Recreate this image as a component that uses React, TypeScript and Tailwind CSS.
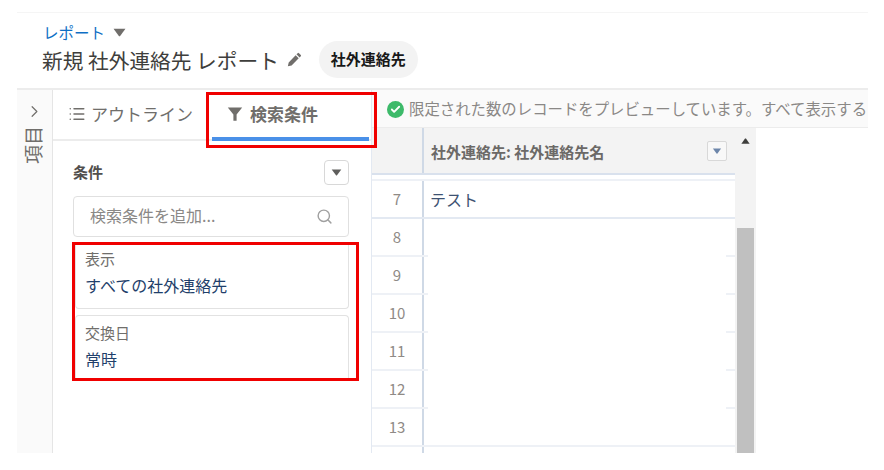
import { Check, ChevronRight, List, Search } from "lucide-react";

const font = "font-['Noto_Sans_CJK_JP','Noto_Sans',sans-serif]";

const Caret = ({ className }: { className: string }) => (
  <svg viewBox="0 0 12 8" className={className} fill="currentColor">
    <path d="M0.5 0.5h11L6.6 7.2c-.3.4-.9.4-1.2 0z" />
  </svg>
);

const Filter = () => (
  <svg viewBox="0 0 16 16" className="w-[16px] h-[16px] text-[#706e6b]" fill="currentColor">
    <path d="M0.8 1.5h14.4L9.6 8.4v6.4H6.4V8.4z" />
  </svg>
);

const PencilIcon = () => (
  <svg viewBox="0 0 16 16" className="ml-[8px] w-[15px] h-[15px] text-[#706e6b]" fill="currentColor">
    <path d="M11.4 1.2a1 1 0 0 1 1.4 0l1.9 1.9a1 1 0 0 1 0 1.4l-1.3 1.3-3.3-3.3zM9.2 3.4l3.3 3.3-7.6 7.6-4 .9.9-4z" />
  </svg>
);

const Card = ({ label, value, className }: { label: string; value: string; className: string }) => (
  <div className={`ml-[2px] border border-[#e2e2e2] pl-[9px] ${className}`}>
    <div className="text-[15px] leading-[20px] text-[#706e6b]">{label}</div>
    <div className="mt-[5px] text-[16px] leading-[22px] text-[#1f3f6b]">{value}</div>
  </div>
);

const rows = [8, 9, 10, 11, 12, 13];

export default function App() {
  return (
    <div className={`relative w-[884px] h-[470px] overflow-hidden bg-white ${font}`}>
      <div className="ml-[17px] w-[851px] h-[13px] border-b border-[#f5f5f5]" />
      <header className="ml-[17px] h-[75px] pl-[25px] pt-[10px]">
        <div className="flex items-center h-[18px]">
          <span className="ml-[1px] text-[15.5px] leading-[18px] text-[#0f6fc5]">レポート</span>
          <Caret className="ml-[8px] w-[13px] h-[9px] text-[#706e6b]" />
        </div>
        <div className="flex items-center h-[37px]">
          <span className="text-[20.7px] leading-[26px] text-[#3e3e3c] whitespace-nowrap">新規 社外連絡先 レポート</span>
          <PencilIcon />
          <span className="ml-[17px] h-[37px] px-[12px] rounded-full bg-[#f3f3f3] text-[15px] font-bold leading-[36px] text-[#181818]">
            社外連絡先
          </span>
        </div>
      </header>

      <main className="ml-[17px] w-[851px] flex h-[365px] border-t-2 border-[#ececec]">
        <aside className="w-[36px] shrink-0 border-r border-[#e5e5e5] bg-[#fafafa] flex flex-col items-center pt-[12px] pr-[4px]">
          <ChevronRight className="ml-[4px] w-[19px] h-[19px] text-[#706e6b]" strokeWidth={1.5} />
          <div className="mt-[5px] text-[19px] leading-[20px] text-[#706e6b] rotate-180 [writing-mode:vertical-rl] [text-orientation:sideways]">
            項目
          </div>
        </aside>

        <section className="w-[318px] shrink-0 flex flex-col">
          <div className="flex h-[51px] border-b-2 border-[#ececec]">
            <div className="w-[159px] pl-[15px] flex items-center gap-[5px] pb-[1px]">
              <List className="w-[18px] h-[18px] text-[#706e6b]" strokeWidth={2} />
              <span className="text-[17px] text-[#706e6b] whitespace-nowrap">アウトライン</span>
            </div>
            <div className="w-[157px] h-[51px] border-b-[4px] border-[#4a90e8] pl-[15px] flex items-center gap-[7px]">
              <Filter />
              <span className="text-[17px] font-bold text-[#706e6b]">検索条件</span>
            </div>
          </div>
          <div className="pl-[20px] pr-[22px]">
            <div className="flex items-center justify-between mt-[19px] h-[25px]">
              <span className="text-[15px] font-bold text-[#514f4d]">条件</span>
              <span className="w-[25px] h-[25px] rounded-[4px] border border-[#d8d8d8] flex items-center justify-center">
                <Caret className="w-[11px] h-[7px] text-[#5f5e5c]" />
              </span>
            </div>
            <div className="mt-[11px] h-[41px] rounded-[4px] border border-[#e0e0e0] flex items-center justify-between pl-[16px] pr-[15px]">
              <span className="pb-[3px] text-[16px] text-[#8a8886]">検索条件を追加...</span>
              <Search className="w-[17px] h-[17px] text-[#a0a0a0]" />
            </div>
            <Card label="表示" value="すべての社外連絡先" className="mt-[6px] h-[66px] rounded-b-[4px] border-t-0 pt-[6px]" />
            <Card label="交換日" value="常時" className="mt-[6px] h-[66px] rounded-t-[4px] border-b-0 pt-[7px]" />
          </div>
        </section>

        <section className="flex-1 min-w-0 overflow-hidden flex flex-col border-l-1 border-[#e3e9f2]">
          <div className="h-[38px] bg-[#fafafa] border-b border-[#ececec] flex items-center pl-[15px] pt-[1px]">
            <span className="shrink-0 w-[17px] h-[17px] rounded-full bg-[#3dba6a] flex items-center justify-center">
              <Check className="w-[11px] h-[11px] text-white" strokeWidth={4} />
            </span>
            <span className="ml-[5px] text-[15.4px] text-[#8a8886] whitespace-nowrap">
              限定された数のレコードをプレビューしています。すべて表示する
            </span>
          </div>
          <div className="flex w-[384px] flex-1 min-h-0">
            <div className="w-[363px] flex flex-col">
              <div className="flex h-[47px] bg-[#f3f3f3] border-b-2 border-[#d9e1ed]">
                <div className="w-[50px]" />
                <div className="flex-1 border-l-2 border-[#cfd9e6] pl-[7px] pr-[8px] flex items-center justify-between">
                  <span className="pt-[4px] text-[15px] font-bold text-[#6b6967] whitespace-nowrap">社外連絡先: 社外連絡先名</span>
                  <span className="w-[20px] h-[20px] rounded-[2px] border border-[#d8d8d8] bg-[#f8f8f8] flex items-center justify-center">
                    <Caret className="w-[10px] h-[6px] text-[#6d86aa]" />
                  </span>
                </div>
              </div>
              <div className="h-[6px] border-b-2 border-[#eef1f6]" />
              <div className="flex h-[38px] border-b-2 border-[#e3e9f2]">
                <div className="w-[50px] text-center text-[15px] leading-[36px] text-[#8f8a86]">7</div>
                <div className="flex-1 border-l-2 border-[#cfd9e6] pl-[6px] text-[16px] leading-[36px] text-[#3e5272]">テスト</div>
              </div>
              {rows.map((n) => (
                <div key={n} className="relative flex h-[38px] border-b-2 border-[#eef1f6]">
                  <div className="w-[50px] text-center text-[15px] leading-[36px] text-[#8f8a86]">{n}</div>
                  <div className="flex-1 border-l-2 border-[#cfd9e6]" />
                  {n < 13 && <div className="absolute left-[56px] w-[298px] -bottom-[2px] h-[2px] bg-white" />}
                </div>
              ))}
              <div className="flex flex-1">
                <div className="w-[50px]" />
                <div className="flex-1 border-l-2 border-[#cfd9e6]" />
              </div>
            </div>
            <div className="w-[21px] bg-[#f3f3f3] flex flex-col items-center">
              <Caret className="w-[9px] h-[6px] mt-[10px] rotate-180 text-[#3e3e3c]" />
              <div className="mt-[84px] w-[17px] flex-1 bg-[#c0c0c0]" />
            </div>
          </div>
        </section>
      </main>

      <div className="absolute left-[206px] top-[92px] w-[171px] h-[56px] border-[3px] border-[#f00000]" />
      <div className="absolute left-[72px] top-[242px] w-[287px] h-[139px] border-[3px] border-[#f00000]" />
    </div>
  );
}
